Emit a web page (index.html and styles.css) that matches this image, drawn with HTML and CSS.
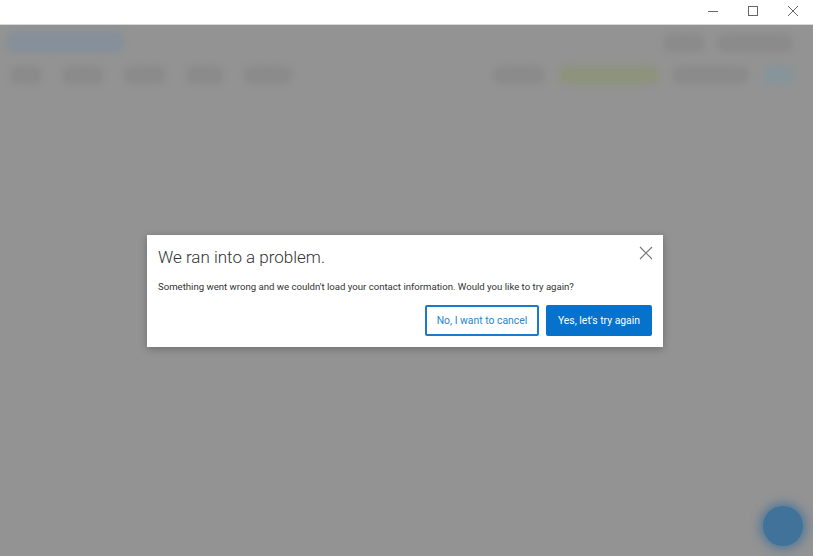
FILE: index.html
```html
<!DOCTYPE html>
<html lang="en">

<head>
    <meta charset="UTF-8">
    <meta name="viewport" content="width=device-width, initial-scale=1.0">
    <title>Contact information</title>
    <link rel="stylesheet" href="styles.css">
</head>

<body>

<div class="titlebar">
    <div class="controls">
        <span class="ctl">
            <svg width="12" height="12" viewBox="0 0 12 12"><path d="M1 6.5h10" stroke="#666" stroke-width="1"/></svg>
        </span>
        <span class="ctl">
            <svg width="12" height="12" viewBox="0 0 12 12"><rect x="1.5" y="1.5" width="9" height="9" fill="none" stroke="#666" stroke-width="1"/></svg>
        </span>
        <span class="ctl">
            <svg width="12" height="12" viewBox="0 0 12 12"><path d="M1 1l10 10M11 1L1 11" stroke="#666" stroke-width="1"/></svg>
        </span>
    </div>
</div>

<div class="app">
    <div class="backdrop">
        <div class="top-row">
            <div class="blob logo"></div>
            <div class="right-links">
                <div class="blob w40"></div>
                <div class="blob w75"></div>
            </div>
        </div>
        <div class="nav-row">
            <div class="nav-left">
                <div class="blob w30"></div>
                <div class="blob w40"></div>
                <div class="blob w40"></div>
                <div class="blob w35"></div>
                <div class="blob w45"></div>
            </div>
            <div class="nav-right">
                <div class="blob w50"></div>
                <div class="blob green"></div>
                <div class="blob w75"></div>
                <div class="blob teal"></div>
            </div>
        </div>
        <div class="fab"></div>
    </div>

    <div class="dialog">
        <div class="dialog-head">
            <h2>We ran into a problem.</h2>
            <button class="close" aria-label="Close">
                <svg width="14" height="14" viewBox="0 0 14 14"><path d="M1 1l12 12M13 1L1 13" stroke="#777" stroke-width="1.1"/></svg>
            </button>
        </div>
        <p>Something went wrong and we couldn't load your contact information. Would you like to try again?</p>
        <div class="actions">
            <button class="btn outline">No, I want to cancel</button>
            <button class="btn primary">Yes, let's try again</button>
        </div>
    </div>
</div>

</body>

</html>
```

FILE: styles.css
```css
body, html {
    margin: 0;
    padding: 0;
    height: 100%;
    overflow: hidden;
}

body {
    font-family: Roboto, "Liberation Sans", sans-serif;
    display: flex;
    flex-direction: column;
}

.titlebar {
    height: 25px;
    background-color: white;
    border-bottom: 1px solid #d8d8d8;
    box-sizing: border-box;
    display: flex;
    justify-content: flex-end;
}

.controls {
    display: flex;
}

.ctl {
    width: 40px;
    display: flex;
    align-items: center;
    justify-content: center;
    padding-bottom: 2px;
}

.app {
    flex: 1;
    position: relative;
    background-color: #939393;
}

.backdrop {
    height: 100%;
    position: relative;
}

.top-row {
    display: flex;
    justify-content: space-between;
    padding: 11px 24px 0 10px;
}

.right-links {
    display: flex;
    gap: 20px;
    padding-top: 2px;
}

/* blurred shapes of the app behind the overlay */
.blob {
    height: 10px;
    background-color: #8b8b8b;
    box-shadow: 0 0 6px 4px #8b8b8b;
    border-radius: 4px;
}

.logo {
    width: 110px;
    height: 12px;
    background-color: #85909a;
    box-shadow: 0 0 6px 4px #85909a;
}

.nav-row {
    display: flex;
    justify-content: space-between;
    padding: 22px 22px 0 14px;
}

.nav-left, .nav-right {
    display: flex;
    gap: 28px;
}

.nav-right {
    gap: 22px;
}

.w30 { width: 24px; }
.w35 { width: 30px; }
.w40 { width: 34px; }
.w45 { width: 40px; }
.w50 { width: 44px; }
.w75 { width: 68px; }

.green {
    width: 92px;
    background-color: #8e937d;
    box-shadow: 0 0 6px 4px #8e937d;
}

.teal {
    width: 24px;
    background-color: #87959a;
    box-shadow: 0 0 6px 4px #87959a;
}

.fab {
    position: absolute;
    right: 10px;
    bottom: 10px;
    width: 40px;
    height: 40px;
    border-radius: 50%;
    background-color: #41729a;
    box-shadow: 0 0 8px 4px rgba(65, 114, 154, 0.7);
}

.dialog {
    position: absolute;
    left: 147px;
    top: 210px;
    width: 516px;
    box-sizing: border-box;
    background-color: white;
    padding: 10px 11px 11px 11px;
    box-shadow: 0 2px 8px rgba(0, 0, 0, 0.25);
}

.dialog-head {
    display: flex;
    justify-content: space-between;
    align-items: flex-start;
}

.dialog h2 {
    margin: 0;
    font-size: 17px;
    font-weight: 300;
    color: #333;
    line-height: 24px;
}

.close {
    border: none;
    background: none;
    padding: 0;
    margin: 1px -1px 0 0;
    line-height: 0;
}

.dialog p {
    margin: 11px 0 0 0;
    font-size: 9.6px;
    color: #333;
    line-height: 14px;
}

.actions {
    display: flex;
    justify-content: flex-end;
    gap: 7px;
    margin-top: 11px;
}

.btn {
    font-family: Roboto, "Liberation Sans", sans-serif;
    font-size: 10.4px;
    height: 31px;
    border-radius: 2px;
    padding: 0;
    white-space: nowrap;
}

.outline {
    width: 114px;
    background-color: white;
    color: #2a85cc;
    border: 2px solid #1a7acb;
}

.primary {
    width: 106px;
    background-color: #0672cb;
    color: white;
    border: none;
}
```
